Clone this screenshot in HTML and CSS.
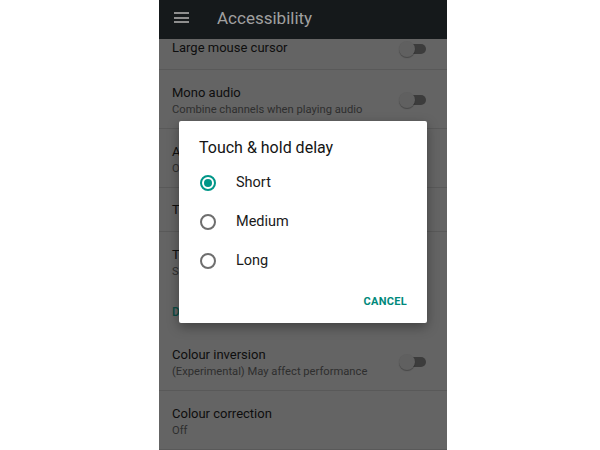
FILE: index.html
```html
<!DOCTYPE html>
<html>
<head>
<meta charset="utf-8">
<link rel="stylesheet" href="styles.css">
</head>
<body>
<div class="phone">
  <header class="topbar">
    <span class="menu"><i></i><i></i><i></i></span>
    <span class="topbar-title">Accessibility</span>
  </header>
  <div class="list">
    <div class="row row-partial">
      <div class="texts"><div class="title">Large mouse cursor</div></div>
      <span class="toggle"></span>
    </div>
    <div class="row row-two">
      <div class="texts"><div class="title">Mono audio</div><div class="sub">Combine channels when playing audio</div></div>
      <span class="toggle"></span>
    </div>
    <div class="row row-two">
      <div class="texts"><div class="title">Accessibility shortcut</div><div class="sub">Off</div></div>
    </div>
    <div class="row row-one">
      <div class="texts"><div class="title">Text-to-speech output</div></div>
    </div>
    <div class="row row-two no-line">
      <div class="texts"><div class="title">Touch &amp; hold delay</div><div class="sub">Short</div></div>
    </div>
    <div class="category">Display</div>
    <div class="row row-two">
      <div class="texts"><div class="title">Colour inversion</div><div class="sub">(Experimental) May affect performance</div></div>
      <span class="toggle"></span>
    </div>
    <div class="row row-two">
      <div class="texts"><div class="title">Colour correction</div><div class="sub">Off</div></div>
    </div>
  </div>
  <div class="navstrip"></div>

  <div class="dialog">
    <div class="dialog-title">Touch &amp; hold delay</div>
    <div class="option"><span class="radio checked"></span><span class="label">Short</span></div>
    <div class="option"><span class="radio"></span><span class="label">Medium</span></div>
    <div class="option"><span class="radio"></span><span class="label">Long</span></div>
    <div class="actions"><span class="btn">CANCEL</span></div>
  </div>
</div>
</body>
</html>
```

FILE: styles.css
```css
html, body {
  margin: 0;
  padding: 0;
  background: #ffffff;
}
body {
  font-family: Roboto, "Noto Sans", "Liberation Sans", sans-serif;
  width: 600px;
  height: 450px;
  overflow: hidden;
}
.phone {
  position: relative;
  margin-left: 159px;
  width: 288px;
  height: 450px;
  background: #646464;
  overflow: hidden;
  display: flex;
  flex-direction: column;
}
.topbar {
  height: 39px;
  flex: none;
  box-sizing: border-box;
  padding-bottom: 4px;
  background: #15191b;
  display: flex;
  align-items: center;
}
.menu {
  margin-left: 15px;
  width: 15px;
  height: 11px;
  display: flex;
  flex-direction: column;
  justify-content: space-between;
}
.menu i {
  display: block;
  height: 2px;
  background: #8e8e8e;
}
.topbar-title {
  margin-left: 28px;
  font-size: 17px;
  color: #a0a0a0;
  font-weight: 400;
}
.list {
  flex: 1;
  display: flex;
  flex-direction: column;
}
.row {
  display: flex;
  align-items: center;
  padding: 0 21px 0 13px;
  border-bottom: 1px solid #595959;
  box-sizing: border-box;
}
.row.no-line { border-bottom: none; }
.row-partial { height: 31px; padding-bottom: 12px; }
.row-partial .toggle { margin-top: 2px; }
.row-two { height: 59px; }
.row-two .texts { padding-top: 3px; }
.row-one { height: 44px; }
.texts { flex: 1; }
.title {
  font-size: 13px;
  line-height: 18px;
  color: #0e0e0e;
}
.sub {
  font-size: 11.2px;
  line-height: 16px;
  color: #2e2e2e;
}
.category {
  height: 41px;
  padding-left: 13px;
  display: flex;
  align-items: center;
  font-size: 12px;
  font-weight: 500;
  color: #0b4a42;
}
.toggle {
  position: relative;
  width: 27px;
  height: 16px;
  flex: none;
}
.row-two .toggle { margin-top: 2px; }
.toggle::before {
  content: "";
  position: absolute;
  left: 4px;
  right: 0;
  top: 3px;
  height: 10px;
  border-radius: 5px;
  background: #3c3c3c;
}
.toggle::after {
  content: "";
  position: absolute;
  left: 0;
  top: 0;
  width: 16px;
  height: 16px;
  border-radius: 50%;
  background: #606060;
  box-shadow: 0 1px 1px rgba(0,0,0,0.3);
}
.navstrip {
  height: 2px;
  flex: none;
  background: #2a2a2a;
}
.dialog {
  position: absolute;
  left: 20px;
  top: 121px;
  width: 248px;
  height: 202px;
  background: #ffffff;
  border-radius: 2px;
  box-shadow: 0 4px 12px rgba(0,0,0,0.35);
  box-sizing: border-box;
  padding: 16px 20px 4px 20px;
  display: flex;
  flex-direction: column;
}
.dialog-title {
  font-size: 16px;
  line-height: 22px;
  font-weight: 400;
  color: #141414;
  margin-bottom: 4px;
}
.option {
  height: 39px;
  display: flex;
  align-items: center;
}
.radio {
  width: 16px;
  height: 16px;
  margin-left: 1px;
  border: 2px solid #6e6e6e;
  border-radius: 50%;
  box-sizing: border-box;
  position: relative;
  flex: none;
}
.radio.checked {
  border-color: #009688;
}
.radio.checked::after {
  content: "";
  position: absolute;
  left: 2px;
  top: 2px;
  width: 8px;
  height: 8px;
  border-radius: 50%;
  background: #009688;
}
.label {
  margin-left: 20px;
  font-size: 14.5px;
  color: #1a1a1a;
}
.actions {
  flex: 1;
  display: flex;
  justify-content: flex-end;
  align-items: center;
  padding-top: 4px;
}
.btn {
  font-size: 11px;
  font-weight: 700;
  letter-spacing: 0.3px;
  color: #00897b;
}
```
